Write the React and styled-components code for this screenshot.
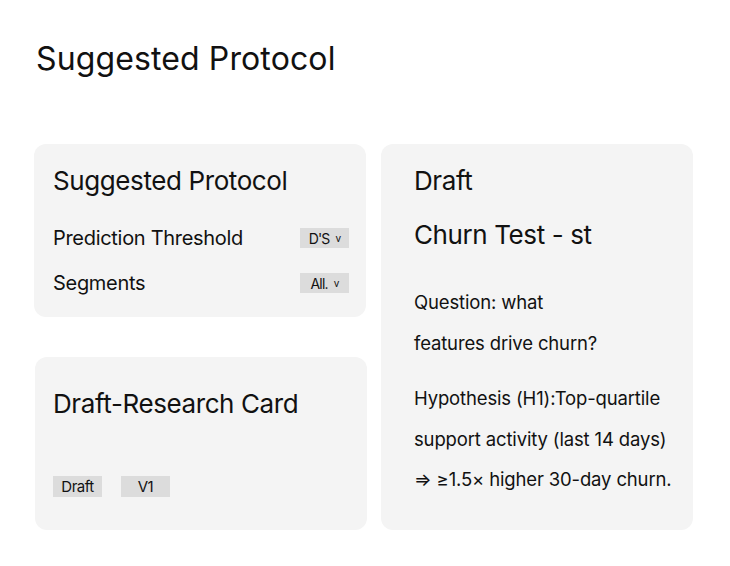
import React from "react";
import styled, { createGlobalStyle } from "styled-components";

const GlobalStyle = createGlobalStyle`
  html, body {
    margin: 0;
    padding: 0;
    background: #ffffff;
    font-family: Inter, "Noto Sans", sans-serif;
    color: #111111;
  }
`;

const Page = styled.div`
  width: 730px;
  height: 566px;
  box-sizing: border-box;
  padding: 39px 37px 0 34px;
`;

const PageTitle = styled.h1`
  margin: 0 0 0 2px;
  font-size: 32px;
  font-weight: 400;
  line-height: 40px;
  letter-spacing: 0.12px;
`;

const Grid = styled.div`
  margin-top: 65px;
  display: grid;
  grid-template-columns: 333px 312px;
  column-gap: 14px;
`;

const Column = styled.div`
  display: flex;
  flex-direction: column;
  gap: 40px;
`;

const Card = styled.div`
  background: #f4f4f4;
  border-radius: 12px;
  box-sizing: border-box;
  height: ${(p) => p.$height}px;
  padding: ${(p) => p.$padding};
  margin: 0 ${(p) => p.$mr || 0}px 0 ${(p) => p.$ml || 0}px;
  display: flex;
  flex-direction: column;
`;

const CardTitle = styled.div`
  font-size: 26px;
  line-height: 34px;
  letter-spacing: -0.4px;
  margin-top: ${(p) => p.$mt || 0}px;
`;

const FieldRow = styled.div`
  display: flex;
  align-items: center;
  justify-content: space-between;
  height: 24px;
  margin-top: ${(p) => p.$mt}px;
`;

const FieldLabel = styled.span`
  font-size: 20px;
  letter-spacing: -0.3px;
`;

const Select = styled.div`
  width: 49px;
  height: 20px;
  background: #dcdcdc;
  display: flex;
  align-items: center;
  justify-content: center;
  gap: 6px;
  font-size: 14px;
  letter-spacing: -0.8px;
`;

const Caret = styled.span`
  font-size: 10px;
`;

const Chips = styled.div`
  display: flex;
  gap: 19px;
  margin-top: auto;
`;

const Chip = styled.div`
  width: 49px;
  height: 21px;
  background: #dcdcdc;
  display: flex;
  align-items: center;
  justify-content: center;
  font-size: 15px;
  letter-spacing: -0.5px;
`;

const BodyText = styled.p`
  margin: ${(p) => p.$mt}px 0 0;
  font-size: 18.5px;
  line-height: 40.5px;
  letter-spacing: -0.15px;
`;

export default function App() {
  return (
    <Page>
      <GlobalStyle />
      <PageTitle>Suggested Protocol</PageTitle>
      <Grid>
        <Column>
          <Card $height={173} $padding="20px 17px 0 19px" $mr={1}>
            <CardTitle>Suggested Protocol</CardTitle>
            <FieldRow $mt={28}>
              <FieldLabel>Prediction Threshold</FieldLabel>
              <Select>
                D'S <Caret>v</Caret>
              </Select>
            </FieldRow>
            <FieldRow $mt={21}>
              <FieldLabel>Segments</FieldLabel>
              <Select>
                All. <Caret>v</Caret>
              </Select>
            </FieldRow>
          </Card>
          <Card $height={173} $padding="30px 17px 33px 18px" $ml={1}>
            <CardTitle>Draft-Research Card</CardTitle>
            <Chips>
              <Chip>Draft</Chip>
              <Chip>V1</Chip>
            </Chips>
          </Card>
        </Column>
        <Card $height={386} $padding="20px 20px 0 33px">
          <CardTitle>Draft</CardTitle>
          <CardTitle $mt={20}>Churn Test - st</CardTitle>
          <BodyText $mt={30}>
            Question: what
            <br />
            features drive churn?
          </BodyText>
          <BodyText $mt={15}>
            Hypothesis (H1):Top-quartile
            <br />
            support activity (last 14 days)
            <br />
            ⇒ ≥1.5× higher 30-day churn.
          </BodyText>
        </Card>
      </Grid>
    </Page>
  );
}
